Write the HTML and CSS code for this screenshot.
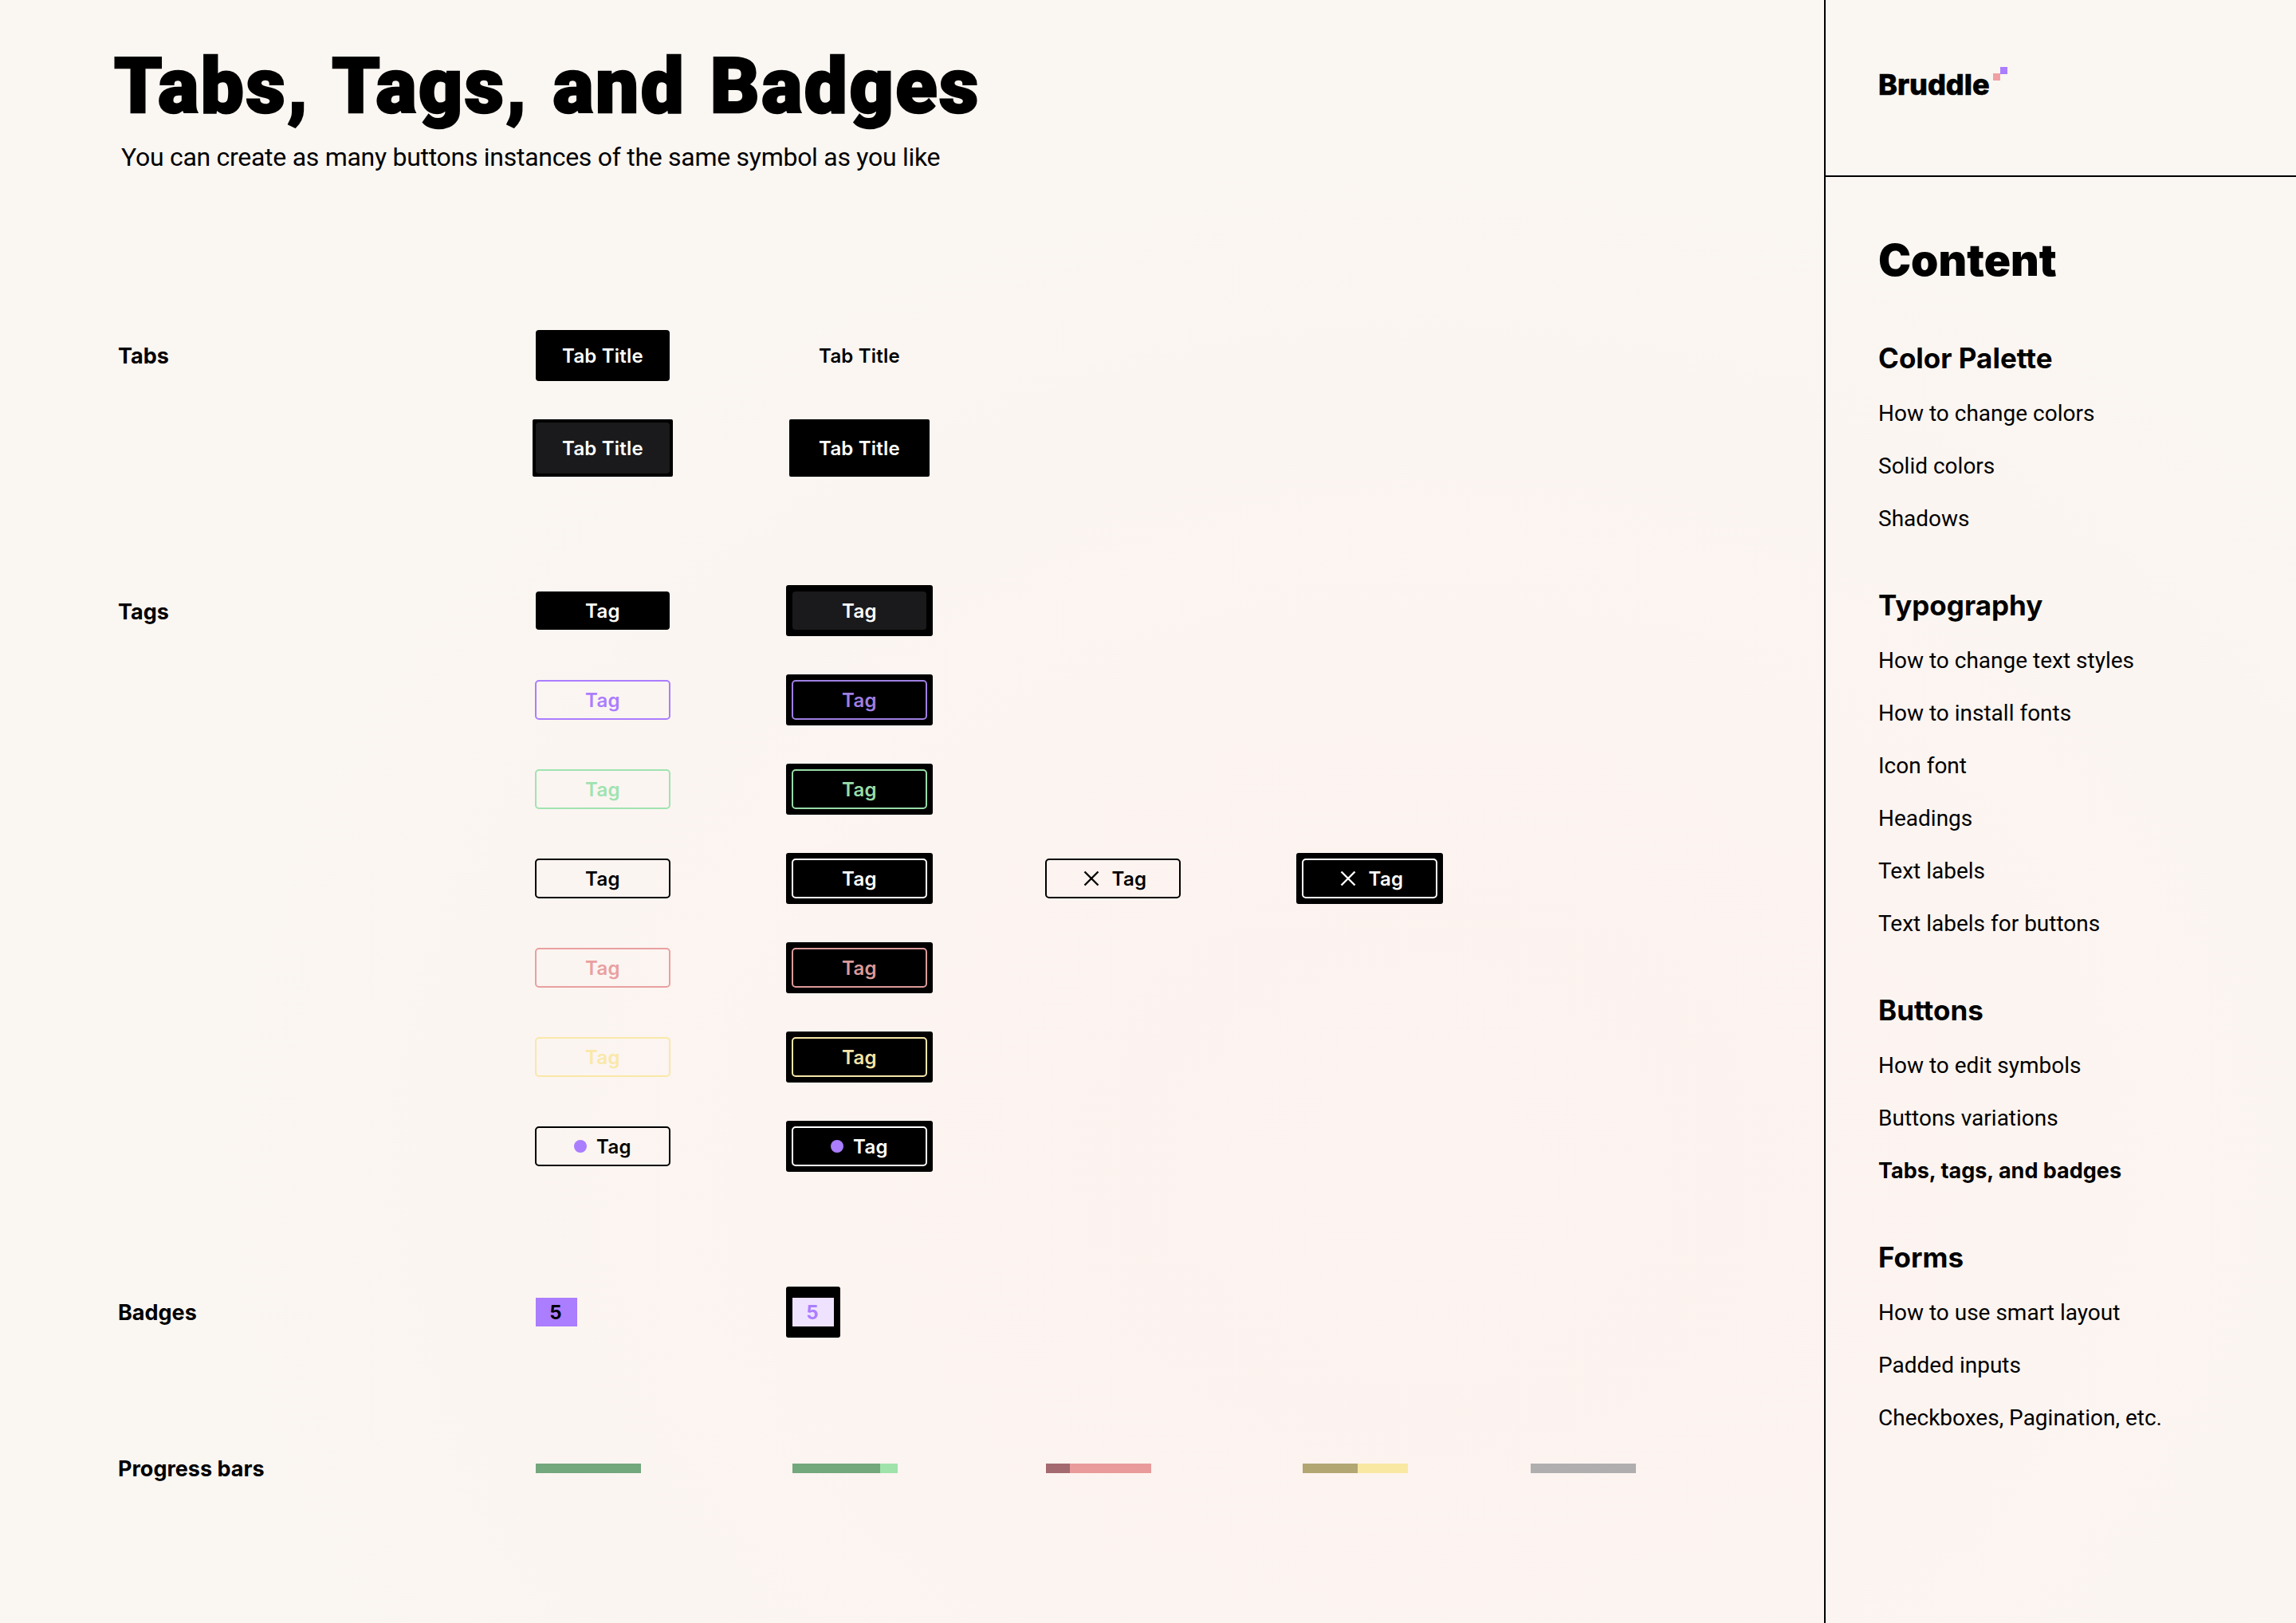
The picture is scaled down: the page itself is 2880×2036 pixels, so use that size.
FILE: index.html
```html
<!DOCTYPE html>
<html>

<head>
  <meta charset="utf-8">
  <title>Tabs, Tags, and Badges</title>
  <link rel="stylesheet" href="styles.css">
</head>

<body>
  <div class="page">
    <main class="main">
      <div class="header">
        <h1>Tabs, Tags, and Badges</h1>
        <p>You can create as many buttons instances of the same symbol as you like</p>
      </div>

      <section class="section tabs">
        <div class="label">Tabs</div>
        <div class="cell"><span class="tab tab-active">Tab Title</span></div>
        <div class="cell"><span class="tab tab-plain">Tab Title</span></div>
        <div class="cell first"><span class="tab-frame"><span class="tab tab-pressed">Tab Title</span></span></div>
        <div class="cell"><span class="tab-frame"><span class="tab tab-active">Tab Title</span></span></div>
      </section>

      <section class="section tags">
        <div class="label">Tags</div>
        <div class="cell"><span class="tag tag-solid">Tag</span></div>
        <div class="frame"><span class="tag tag-pressed">Tag</span></div>

        <div class="cell first"><span class="tag tag-line purple">Tag</span></div>
        <div class="frame"><span class="tag tag-line purple-dark">Tag</span></div>

        <div class="cell first"><span class="tag tag-line green">Tag</span></div>
        <div class="frame"><span class="tag tag-line green-dark">Tag</span></div>

        <div class="cell first"><span class="tag tag-line">Tag</span></div>
        <div class="frame"><span class="tag tag-line white">Tag</span></div>
        <div class="cell">
          <span class="tag tag-line">
            <svg class="close" viewBox="0 0 20 20"><path d="M1.5 1.5L18.5 18.5M18.5 1.5L1.5 18.5" /></svg>Tag
          </span>
        </div>
        <div class="frame">
          <span class="tag tag-line white">
            <svg class="close" viewBox="0 0 20 20"><path d="M1.5 1.5L18.5 18.5M18.5 1.5L1.5 18.5" /></svg>Tag
          </span>
        </div>

        <div class="cell first"><span class="tag tag-line red">Tag</span></div>
        <div class="frame"><span class="tag tag-line red-dark">Tag</span></div>

        <div class="cell first"><span class="tag tag-line yellow">Tag</span></div>
        <div class="frame"><span class="tag tag-line yellow-dark">Tag</span></div>

        <div class="cell first"><span class="tag tag-line"><i class="dot"></i>Tag</span></div>
        <div class="frame"><span class="tag tag-line white"><i class="dot"></i>Tag</span></div>
      </section>

      <section class="section badges">
        <div class="label">Badges</div>
        <div class="cell"><span class="badge">5</span></div>
        <div class="frame frame-badge"><span class="badge badge-light">5</span></div>
      </section>

      <section class="section progress">
        <div class="label">Progress bars</div>
        <div class="cell"><div class="bar bar-green"><span class="fill" style="width: 100%"></span></div></div>
        <div class="cell"><div class="bar bar-green"><span class="fill" style="width: 83%"></span></div></div>
        <div class="cell"><div class="bar bar-red"><span class="fill" style="width: 23%"></span></div></div>
        <div class="cell"><div class="bar bar-yellow"><span class="fill" style="width: 52%"></span></div></div>
        <div class="cell"><div class="bar bar-gray"></div></div>
      </section>
    </main>

    <aside class="sidebar">
      <div class="logo">
        <span class="logo-name">Bruddle</span>
        <span class="logo-marks"><i class="mark-purple"></i><i class="mark-pink"></i></span>
      </div>
      <nav class="nav">
        <h2>Content</h2>
        <h3>Color Palette</h3>
        <a>How to change colors</a>
        <a>Solid colors</a>
        <a>Shadows</a>
        <h3>Typography</h3>
        <a>How to change text styles</a>
        <a>How to install fonts</a>
        <a>Icon font</a>
        <a>Headings</a>
        <a>Text labels</a>
        <a>Text labels for buttons</a>
        <h3>Buttons</h3>
        <a>How to edit symbols</a>
        <a>Buttons variations</a>
        <a class="active">Tabs, tags, and badges</a>
        <h3>Forms</h3>
        <a>How to use smart layout</a>
        <a>Padded inputs</a>
        <a>Checkboxes, Pagination, etc.</a>
      </nav>
    </aside>
  </div>
</body>

</html>
```

FILE: styles.css
```css
* {
  box-sizing: border-box;
}

html,
body {
  margin: 0;
  height: 100%;
}

body {
  background: radial-gradient(ellipse at 62% 72%, #fdf3f0 0%, #fcf4f0 30%, #faf6f2 62%);
  color: black;
  font-family: Inter, "Liberation Sans", sans-serif;
  overflow: hidden;
}

.page {
  display: flex;
  height: 2036px;
}

.main {
  width: 2288px;
  padding-left: 148px;
}

.header {
  height: 276px;
  padding-top: 50px;
}

h1 {
  margin: 0 0 0 -5px;
  font-family: Roboto, sans-serif;
  font-size: 96px;
  line-height: 116px;
  font-weight: 900;
  letter-spacing: 2.55px;
  word-spacing: 4px;
  -webkit-text-stroke: 2.5px black;
}

.header p {
  margin: 11px 0 0 4px;
  font-family: Roboto, sans-serif;
  font-size: 32px;
  line-height: 40px;
  letter-spacing: -0.28px;
}

.section {
  display: grid;
  grid-template-columns: 516px 322px 318px 322px 286px 200px;
  align-items: center;
  row-gap: 48px;
}

.tabs {
  padding-top: 134px;
  row-gap: 44px;
}

.tags {
  margin-top: 136px;
}

.badges {
  margin-top: 144px;
}

.progress {
  margin-top: 140px;
  height: 48px;
}

.label {
  padding-top: 2px;
  font-size: 27px;
  line-height: 36px;
  font-weight: 700;
}

.tags .label {
  padding-top: 4px;
}

.cell {
  display: flex;
  padding-left: 8px;
}

.first {
  grid-column: 2;
}

.frame {
  display: flex;
  width: 184px;
  padding: 8px;
  background-color: black;
  border-radius: 3px;
}

.frame-badge {
  width: 68px;
  padding: 14px 8px;
}

.tab,
.tag {
  display: flex;
  align-items: center;
  justify-content: center;
  width: 168px;
  border-radius: 4px;
  font-weight: 600;
  white-space: nowrap;
}

.tab {
  height: 64px;
  font-size: 24px;
  letter-spacing: 0.2px;
}

.tab-active {
  background-color: black;
  color: white;
}

.tab-plain {
  color: black;
}

.tab-pressed {
  background-color: #1a1a1c;
  color: white;
}

.tab-frame {
  display: flex;
  margin-left: -4px;
  padding: 4px;
  background-color: black;
  border-radius: 2px;
}

.tabs .cell {
  min-height: 72px;
  align-items: center;
}

.tag {
  height: 48px;
  font-size: 24px;
  letter-spacing: 0.4px;
}

.tag-solid {
  background-color: black;
  color: white;
}

.tag-pressed {
  background-color: #1a1a1c;
  color: white;
}

.tag-line {
  outline: 2px solid black;
  outline-offset: -1px;
}

.white {
  outline-color: white;
  color: white;
}

.purple {
  outline-color: #ab7dff;
  color: #ab7dff;
}

.purple-dark {
  outline-color: #9f7fe2;
  color: #9f7fe2;
}

.green {
  outline-color: #a0e3b0;
  color: #a0e3b0;
}

.green-dark {
  outline-color: #98dca8;
  color: #98dca8;
}

.red {
  outline-color: #e9a0a0;
  color: #e9a0a0;
}

.red-dark {
  outline-color: #dc9a9a;
  color: #dc9a9a;
}

.yellow {
  outline-color: #fae8a8;
  color: #fae8a8;
}

.yellow-dark {
  outline-color: #f5e5a8;
  color: #f5e5a8;
}

.close {
  width: 20px;
  height: 20px;
  margin-left: 6px;
  margin-right: 15px;
  fill: none;
  stroke: currentColor;
  stroke-width: 2.4;
}

.dot {
  width: 16px;
  height: 16px;
  margin-right: 12px;
  border-radius: 50%;
  background-color: #ab7dff;
}

.badge {
  display: flex;
  align-items: center;
  justify-content: center;
  width: 52px;
  height: 36px;
  padding-right: 2px;
  background-color: #ab7dff;
  font-size: 24px;
  font-weight: 700;
}

.badge-light {
  background-color: #eee2ff;
  color: #ab7dff;
}

.bar {
  width: 132px;
  height: 12px;
}

.fill {
  display: block;
  height: 100%;
}

.bar-green {
  background-color: #9fe3ab;
}

.bar-green .fill {
  background-color: #73a77c;
}

.bar-red {
  background-color: #e99a9a;
}

.bar-red .fill {
  background-color: #a36a70;
}

.bar-yellow {
  background-color: #f9e8a2;
}

.bar-yellow .fill {
  background-color: #b2a673;
}

.bar-gray {
  background-color: #b0aeae;
}

.sidebar {
  flex: 1;
  border-left: 2px solid black;
}

.logo {
  display: flex;
  align-items: flex-start;
  height: 222px;
  padding: 84px 0 0 66px;
  border-bottom: 2px solid black;
}

.logo-name {
  font-size: 36px;
  line-height: 44px;
  font-weight: 800;
  -webkit-text-stroke: 0.6px black;
}

.logo-marks {
  display: flex;
  margin-left: 4px;
}

.mark-purple,
.mark-pink {
  display: block;
  width: 9px;
  height: 9px;
}

.mark-pink {
  order: -1;
  margin-top: 8px;
  background-color: #f0a0a4;
}

.mark-purple {
  background-color: #ab7dff;
}

.nav {
  display: flex;
  flex-direction: column;
  padding: 66px 0 0 66px;
}

.nav h2 {
  margin: 0 0 60px;
  font-size: 55px;
  line-height: 76px;
  font-weight: 900;
}

.nav h3 {
  margin: 0 0 12px;
  font-size: 35px;
  line-height: 50px;
  font-weight: 700;
}

.nav a {
  height: 66px;
  font-family: Roboto, sans-serif;
  font-size: 28px;
  line-height: 66px;
}

.nav a + h3 {
  margin-top: 50px;
}

.nav .active {
  font-family: Inter, sans-serif;
  font-size: 27px;
  font-weight: 700;
}
```
